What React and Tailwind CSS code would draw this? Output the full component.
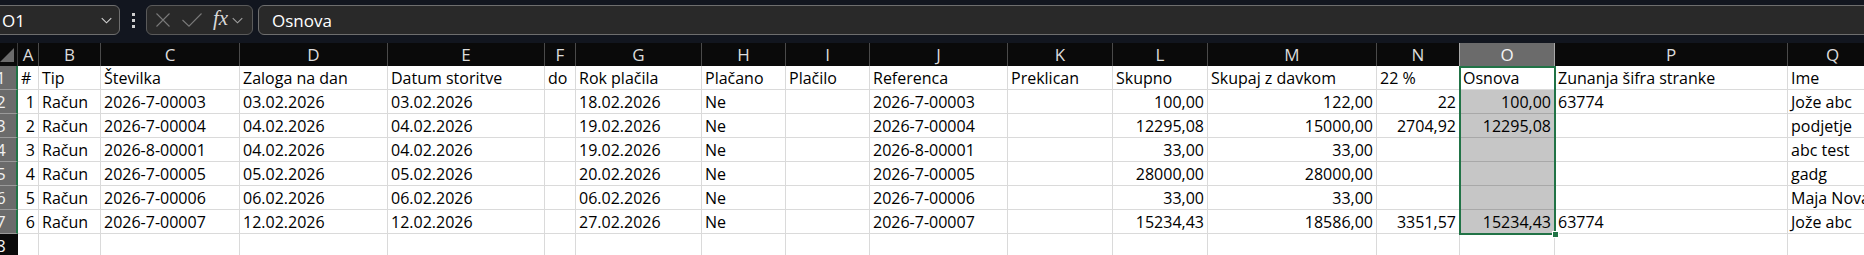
import React from "react";

const COLS = "grid-cols-[18px_21px_62px_139px_148px_157px_31px_126px_84px_84px_138px_105px_95px_169px_83px_95px_233px_90px]";
const LETTERS = ["A","B","C","D","E","F","G","H","I","J","K","L","M","N","O","P","Q"];
// alignment per column: l = left, r = right
const ALIGN = ["r","l","l","l","l","l","l","l","l","l","l","r","r","r","r","l","l"];

const HEAD = ["#","Tip","Številka","Zaloga na dan","Datum storitve","do","Rok plačila","Plačano","Plačilo","Referenca","Preklican","Skupno","Skupaj z davkom","22 %","Osnova","Zunanja šifra stranke","Ime"];

const ROWS = [
  ["1","Račun","2026-7-00003","03.02.2026","03.02.2026","","18.02.2026","Ne","","2026-7-00003","","100,00","122,00","22","100,00","63774","Jože abc"],
  ["2","Račun","2026-7-00004","04.02.2026","04.02.2026","","19.02.2026","Ne","","2026-7-00004","","12295,08","15000,00","2704,92","12295,08","","podjetje"],
  ["3","Račun","2026-8-00001","04.02.2026","04.02.2026","","19.02.2026","Ne","","2026-8-00001","","33,00","33,00","","","","abc test"],
  ["4","Račun","2026-7-00005","05.02.2026","05.02.2026","","20.02.2026","Ne","","2026-7-00005","","28000,00","28000,00","","","","gadg"],
  ["5","Račun","2026-7-00006","06.02.2026","06.02.2026","","06.02.2026","Ne","","2026-7-00006","","33,00","33,00","","","","Maja Novak"],
  ["6","Račun","2026-7-00007","12.02.2026","12.02.2026","","27.02.2026","Ne","","2026-7-00007","","15234,43","18586,00","3351,57","15234,43","63774","Jože abc"],
];

function Chevron({ className }) {
  return (
    <svg className={className} viewBox="0 0 12 7" fill="none" stroke="currentColor" strokeWidth="1.2">
      <path d="M0.8 0.8 L6 6 L11.2 0.8" />
    </svg>
  );
}

function RowHeader({ n, selected }) {
  return (
    <div
      className={
        "h-[24px] flex items-center overflow-hidden border-r-2 " +
        (selected
          ? "bg-[#6b6b6b] text-[#f0f0f0] border-r-[#217346] border-b border-b-[#9a9a9a]"
          : "bg-[#0a0a0a] text-[#f0f0f0] border-r-[#0a0a0a] border-b border-b-[#444]")
      }
    >
      <span className="-ml-[4px] text-[17px] leading-none">{n}</span>
    </div>
  );
}

function Cell({ value, align, col, rowIdx }) {
  const isO = col === 14;
  let bg = "bg-white";
  let border = "border-r border-b border-[#dadada]";
  if (isO && rowIdx >= 1) {
    bg = "bg-[#c6c6c6]";
    border = "border-r border-b border-r-[#dadada] border-b-[#a8a8a8]";
  }
  return (
    <div
      className={
        "h-[24px] flex items-center overflow-visible whitespace-nowrap text-[16px] text-black px-[3px] " +
        bg + " " + border + " " +
        (align === "r" ? "justify-end" : "justify-start")
      }
    >
      {value}
    </div>
  );
}

export default function App() {
  return (
    <div
      className="w-[1864px] h-[255px] overflow-hidden bg-[#12161f] relative"
      style={{ fontFamily: '"Open Sans", "Noto Sans", sans-serif' }}
    >
      {/* Toolbar */}
      <div className="h-[43px] flex items-start pt-[5px]">
        <div className="-ml-[10px] w-[130px] h-[30px] rounded-[6px] border border-[#6e6e6e] bg-[#292929] flex items-center pl-[11px] pr-[6px]">
          <span className="text-white text-[17px] leading-none flex-1">O1</span>
          <Chevron className="w-[11px] h-[7px] text-[#d0d0d0] mr-[1px]" />
        </div>
        <div className="w-[26px] h-[30px] flex flex-col items-center justify-center gap-[3px]">
          <span className="w-[3px] h-[3px] bg-[#cfcfcf]" />
          <span className="w-[3px] h-[3px] bg-[#cfcfcf]" />
          <span className="w-[3px] h-[3px] bg-[#cfcfcf]" />
        </div>
        <div className="w-[107px] h-[30px] rounded-[6px] border border-[#5a5a5a] bg-[#292929] flex items-center pl-[9px]">
          <svg className="w-[14px] h-[14px] text-[#7a7a7a]" viewBox="0 0 14 14" fill="none" stroke="currentColor" strokeWidth="1.1">
            <path d="M0.5 0.5 L13.5 13.5 M13.5 0.5 L0.5 13.5" />
          </svg>
          <svg className="ml-[12px] w-[20px] h-[14px] text-[#7a7a7a]" viewBox="0 0 20 14" fill="none" stroke="currentColor" strokeWidth="1.1">
            <path d="M0.5 7 L7 13.2 L19.5 0.5" />
          </svg>
          <span
            className="ml-[11px] text-[#d8d8d8] text-[21px] italic leading-none -mt-[3px]"
            style={{ fontFamily: '"Liberation Serif", "DejaVu Serif", serif' }}
          >
            fx
          </span>
          <Chevron className="ml-[4px] w-[11px] h-[7px] text-[#a0a0a0]" />
        </div>
        <div className="ml-[5px] flex-1 -mr-[10px] h-[30px] rounded-[6px] border border-[#6e6e6e] bg-[#292929] flex items-center pl-[13px]">
          <span className="text-white text-[17px] leading-none">Osnova</span>
        </div>
      </div>

      {/* Sheet */}
      <div className="relative">
        {/* column headers */}
        <div className={"grid " + COLS + " h-[23px] bg-[#0a0a0a]"}>
          <div className="h-[23px] flex items-end justify-start pb-[4px] border-r border-[#3a3a3a]">
            <svg className="w-[14px] h-[14px]" viewBox="0 0 14 14">
              <path d="M14 0 L14 14 L0 14 Z" fill="#6b6b6b" />
            </svg>
          </div>
          {LETTERS.map((l, i) => (
            <div
              key={l}
              className={
                "h-[23px] flex items-center justify-center text-[17px] leading-none " +
                (i === 14
                  ? "bg-[#6b6b6b] text-[#f4f4f4] border-r border-l border-[#a8a8a8] -ml-px"
                  : "text-[#dcdcdc] border-r border-[#4a4a4a]")
              }
            >
              {l}
            </div>
          ))}
        </div>

        {/* row 1: headers */}
        <div className={"grid " + COLS}>
          <RowHeader n="1" selected />
          {HEAD.map((h, i) => (
            <Cell key={i} value={h} align="l" col={i} rowIdx={0} />
          ))}
        </div>

        {ROWS.map((r, ri) => (
          <div key={ri} className={"grid " + COLS}>
            <RowHeader n={String(ri + 2)} selected />
            {r.map((v, i) => (
              <Cell key={i} value={v} align={ALIGN[i]} col={i} rowIdx={ri + 1} />
            ))}
          </div>
        ))}

        {/* row 8 */}
        <div className={"grid " + COLS}>
          <RowHeader n="8" />
          {LETTERS.map((l, i) => (
            <Cell key={i} value="" align="l" col={-1} rowIdx={7} />
          ))}
        </div>

        {/* selection overlay O1:O7 */}
        <div className="absolute left-[1459px] top-[23px] w-[97px] h-[169px] border-2 border-[#217346] pointer-events-none" />
        <div className="absolute left-[1552px] top-[188px] w-[7px] h-[7px] bg-[#217346] border border-white pointer-events-none" />
      </div>
    </div>
  );
}
